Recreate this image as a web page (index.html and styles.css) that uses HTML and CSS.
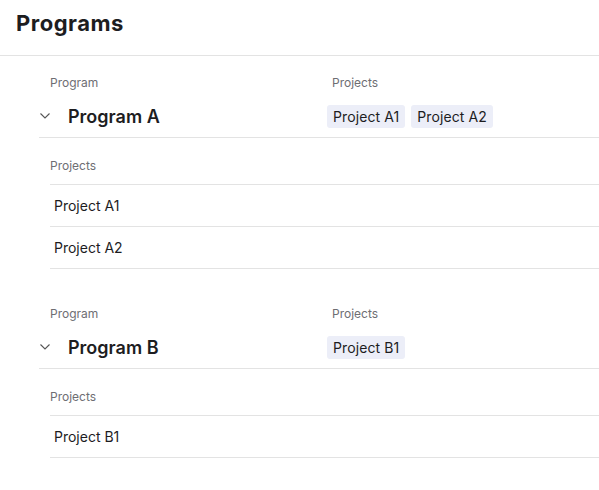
FILE: index.html
```html
<!DOCTYPE html>
<html lang="en">
<head>
<meta charset="utf-8">
<title>Programs</title>
<link rel="stylesheet" href="styles.css">
</head>
<body>
<header class="page-header">
  <h1 class="page-title">Programs</h1>
</header>
<main class="programs">
  <section class="program">
    <div class="col-labels">
      <span class="col-label col-name">Program</span>
      <span class="col-label">Projects</span>
    </div>
    <div class="program-row">
      <span class="chevron"><svg width="10" height="6" viewBox="0 0 10 6"><path d="M0.5 0.5 L5 5 L9.5 0.5" fill="none" stroke="#555" stroke-width="1.1"/></svg></span>
      <span class="program-name">Program A</span>
      <span class="tags">
        <span class="tag">Project A1</span>
        <span class="tag">Project A2</span>
      </span>
    </div>
    <div class="projects">
      <div class="projects-head">Projects</div>
      <div class="project-row">Project A1</div>
      <div class="project-row">Project A2</div>
    </div>
  </section>
  <section class="program">
    <div class="col-labels">
      <span class="col-label col-name">Program</span>
      <span class="col-label">Projects</span>
    </div>
    <div class="program-row">
      <span class="chevron"><svg width="10" height="6" viewBox="0 0 10 6"><path d="M0.5 0.5 L5 5 L9.5 0.5" fill="none" stroke="#555" stroke-width="1.1"/></svg></span>
      <span class="program-name">Program B</span>
      <span class="tags">
        <span class="tag">Project B1</span>
      </span>
    </div>
    <div class="projects">
      <div class="projects-head">Projects</div>
      <div class="project-row">Project B1</div>
    </div>
  </section>
</main>
</body>
</html>
```

FILE: styles.css
```css
* { box-sizing: border-box; }
body {
  margin: 0;
  font-family: Inter, "Noto Sans", sans-serif;
  color: #1d1d1f;
  background: #fff;
}
.page-header {
  height: 56px;
  padding: 9px 15px 0 16px;
  border-bottom: 1px solid #e3e3e3;
}
.page-title {
  margin: 0;
  font-size: 22px;
  line-height: 28px;
  font-weight: 700;
  letter-spacing: 0.5px;
}
.programs {
  display: flex;
  flex-direction: column;
  gap: 18px;
  padding-left: 39px;
}
.col-labels {
  display: flex;
  padding: 19px 0 0 11px;
  font-size: 12px;
  line-height: 16px;
  color: #6e6e73;
}
.col-name { width: 282px; }
.program-row {
  display: flex;
  align-items: center;
  padding: 14px 0 9px;
  border-bottom: 1px solid #e3e3e3;
}
.chevron {
  width: 29px;
  display: flex;
  padding-left: 1px;
  margin-top: -1px;
}
.program-name {
  width: 259px;
  font-size: 18px;
  font-weight: 600;
  line-height: 23px;
}
.tags { display: flex; gap: 6px; }
.tag {
  height: 23px;
  line-height: 23px;
  padding: 0 6px;
  font-size: 14px;
  letter-spacing: 0.1px;
  background: #eceef8;
  border-radius: 3px;
}
.projects { margin-left: 11px; }
.projects-head {
  padding: 20px 0 10px;
  font-size: 12px;
  line-height: 16px;
  color: #6e6e73;
  border-bottom: 1px solid #e3e3e3;
}
.project-row {
  padding: 10px 4px;
  font-size: 14px;
  line-height: 21px;
  border-bottom: 1px solid #e3e3e3;
}
```
